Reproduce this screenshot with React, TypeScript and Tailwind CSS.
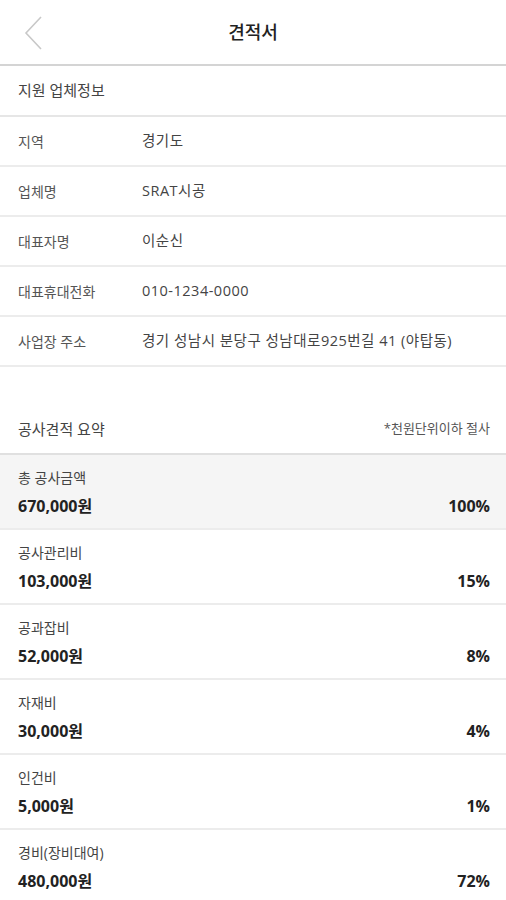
import React from 'react';

const info = [
  { label: '지역', value: '경기도' },
  { label: '업체명', value: 'SRAT시공' },
  { label: '대표자명', value: '이순신' },
  { label: '대표휴대전화', value: '010-1234-0000' },
  { label: '사업장 주소', value: '경기 성남시 분당구 성남대로925번길 41 (야탑동)' },
];

const costs = [
  { label: '총 공사금액', amount: '670,000원', pct: '100%', total: true },
  { label: '공사관리비', amount: '103,000원', pct: '15%' },
  { label: '공과잡비', amount: '52,000원', pct: '8%' },
  { label: '자재비', amount: '30,000원', pct: '4%' },
  { label: '인건비', amount: '5,000원', pct: '1%' },
  { label: '경비(장비대여)', amount: '480,000원', pct: '72%' },
];

export default function App() {
  return (
    <div
      className="w-[506px] h-[900px] overflow-hidden bg-white text-[#333]"
      style={{ fontFamily: '"Open Sans", "Noto Sans CJK KR", sans-serif' }}
    >
      {/* header */}
      <div className="relative h-[66px] flex items-center justify-center border-b-2 border-[#d4d4d4]">
        <svg className="absolute left-[22px] top-[15px]" width="22" height="36" viewBox="0 0 22 36">
          <path d="M19 2 L4 18 L19 34" fill="none" stroke="#c8c8c8" strokeWidth="1.6" />
        </svg>
        <span className="text-[18px] font-medium text-[#222]">견적서</span>
      </div>

      <div className="h-[51px] flex items-center px-[18px] border-b-2 border-[#e6e6e6] text-[15px] text-[#444]">
        지원 업체정보
      </div>

      {info.map((r) => (
        <div key={r.label} className="h-[50px] flex items-center px-[18px] border-b-2 border-[#ececec] text-[14px]">
          <span className="w-[124px] text-[#555]">{r.label}</span>
          <span className="text-[14.5px] tracking-[0.5px] text-[#444]">{r.value}</span>
        </div>
      ))}

      <div className="h-[38px]" />

      <div className="h-[50px] flex items-center justify-between pl-[18px] pr-[16px] border-b-2 border-[#e0e0e0]">
        <span className="text-[15px] text-[#444]">공사견적 요약</span>
        <span className="text-[13px] text-[#555]">*천원단위이하 절사</span>
      </div>

      {costs.map((c) => (
        <div
          key={c.label}
          className={
            'h-[75px] flex flex-col justify-center gap-[8px] pl-[18px] pr-[16px] border-b-2 border-[#ececec] ' +
            (c.total ? 'bg-[#f5f5f5]' : 'bg-white')
          }
        >
          <span className="text-[14px] text-[#444] leading-[20px]">{c.label}</span>
          <div className="flex items-center justify-between leading-[20px]">
            <span className="text-[16px] font-bold text-[#222]">{c.amount}</span>
            <span className="text-[16px] font-bold text-[#222]">{c.pct}</span>
          </div>
        </div>
      ))}
    </div>
  );
}
